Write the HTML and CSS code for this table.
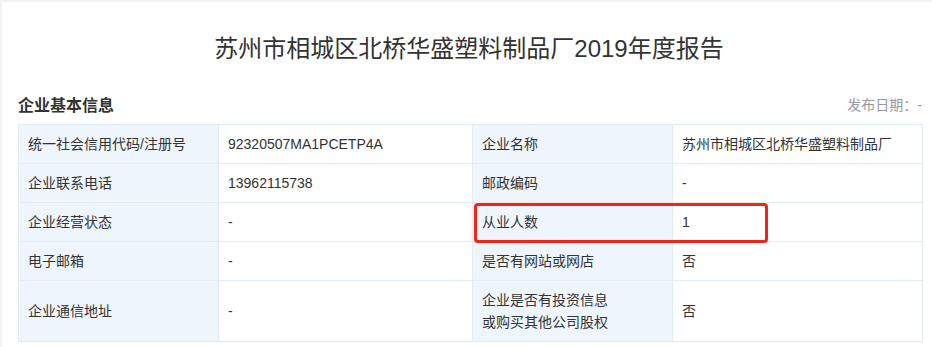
FILE: index.html
```html
<!DOCTYPE html>
<html lang="zh-CN">
<head>
<meta charset="utf-8">
<title>年度报告</title>
<link rel="stylesheet" href="styles.css">
</head>
<body>
<div class="card">
  <h1 class="title">苏州市相城区北桥华盛塑料制品厂2019年度报告</h1>
  <div class="section-head">
    <h2 class="section-title">企业基本信息</h2>
    <span class="pub-date">发布日期：-</span>
  </div>
  <div class="table-wrap">
    <table class="info">
      <colgroup>
        <col class="c1"><col class="c2"><col class="c3"><col class="c4">
      </colgroup>
      <tr>
        <td class="label">统一社会信用代码/注册号</td>
        <td>92320507MA1PCETP4A</td>
        <td class="label">企业名称</td>
        <td>苏州市相城区北桥华盛塑料制品厂</td>
      </tr>
      <tr>
        <td class="label">企业联系电话</td>
        <td>13962115738</td>
        <td class="label">邮政编码</td>
        <td>-</td>
      </tr>
      <tr>
        <td class="label">企业经营状态</td>
        <td>-</td>
        <td class="label">从业人数</td>
        <td>1</td>
      </tr>
      <tr>
        <td class="label">电子邮箱</td>
        <td>-</td>
        <td class="label">是否有网站或网店</td>
        <td>否</td>
      </tr>
      <tr>
        <td class="label">企业通信地址</td>
        <td>-</td>
        <td class="label">企业是否有投资信息<br>或购买其他公司股权</td>
        <td>否</td>
      </tr>
    </table>
    <div class="highlight"></div>
  </div>
</div>
</body>
</html>
```

FILE: styles.css
```css
html, body {
  margin: 0;
  padding: 0;
}
body {
  background: #f2f2f2;
  font-family: "Liberation Sans", "Noto Sans CJK SC", sans-serif;
  color: #333;
}
.card {
  background: #fff;
  margin: 2px 0 0 2px;
  padding: 31px 10px 10px 16px;
  min-height: 340px;
  box-sizing: border-box;
}
.title {
  margin: 0;
  font-size: 24px;
  font-weight: normal;
  line-height: 32px;
  text-align: center;
  color: #333;
  padding-right: 2px;
}
.section-head {
  display: flex;
  justify-content: space-between;
  align-items: center;
  margin-top: 24px;
  height: 30px;
  width: 904px;
}
.section-title {
  margin: 0;
  font-size: 16px;
  font-weight: bold;
  color: #333;
}
.pub-date {
  font-size: 14px;
  color: #999;
}
.table-wrap {
  position: relative;
  margin-top: 5px;
  width: 904px;
}
.info {
  width: 904px;
  table-layout: fixed;
  border-collapse: collapse;
  font-size: 14px;
}
.c1 { width: 200px; }
.c2 { width: 254px; }
.c3 { width: 200px; }
.c4 { width: 250px; }
.info td {
  border: 1px solid #e3ebf3;
  padding: 8px 9px;
  line-height: 22px;
  color: #333;
  vertical-align: middle;
}
.info td.label {
  background: #eef5fc;
}
.highlight {
  position: absolute;
  left: 456px;
  top: 79px;
  width: 294px;
  height: 40px;
  box-sizing: border-box;
  border: 3px solid #f5221a;
  border-radius: 4px;
}
```
